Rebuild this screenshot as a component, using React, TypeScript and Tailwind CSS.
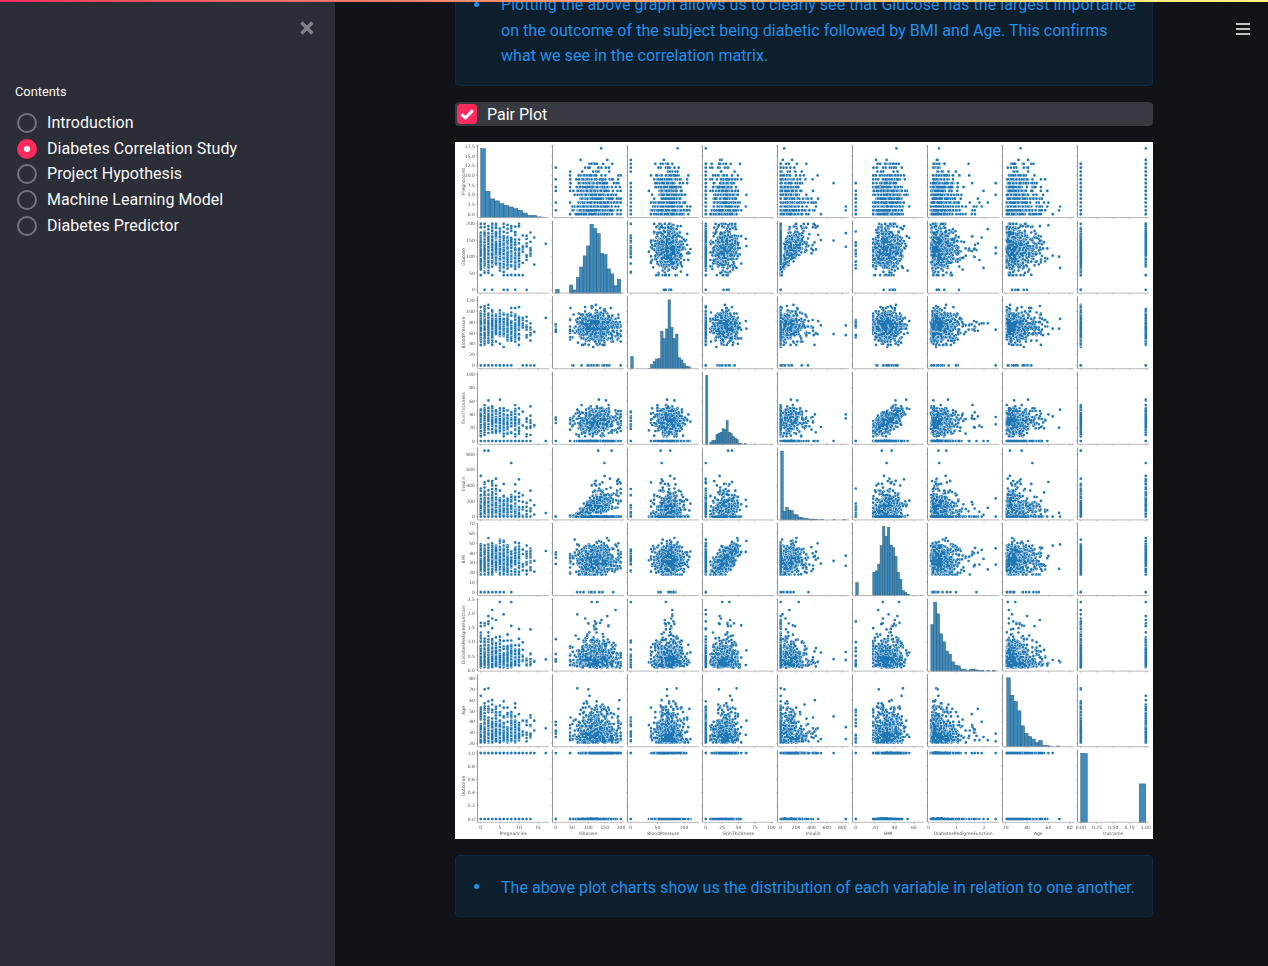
// App.tsx
import React from 'react';

// --- Seeded data for the pair plot ---
function makeRandom(seed: number) {
  return () => {
    seed = (seed + 0x6d2b79f5) | 0;
    let t = Math.imul(seed ^ (seed >>> 15), 1 | seed);
    t = (t + Math.imul(t ^ (t >>> 7), 61 | t)) ^ t;
    return ((t ^ (t >>> 14)) >>> 0) / 4294967296;
  };
}

const clamp = (v: number, lo: number, hi: number) => Math.min(hi, Math.max(lo, v));

const PREG_COUNTS = [111, 135, 103, 75, 68, 57, 50, 45, 38, 28, 24, 11, 9, 10, 2, 1, 0, 1];

function buildRows(): number[][] {
  const rand = makeRandom(42);
  const normal = (m: number, s: number) =>
    m + s * Math.sqrt(-2 * Math.log(1 - rand())) * Math.cos(2 * Math.PI * rand());
  const rows: number[][] = [];
  for (let i = 0; i < 768; i++) {
    const outcome = rand() < 0.349 ? 1 : 0;
    let pick = rand() * 768;
    let preg = 0;
    while (pick > PREG_COUNTS[preg] && preg < 17) {
      pick -= PREG_COUNTS[preg];
      preg++;
    }
    const glucose = rand() < 0.007 ? 0 : Math.round(clamp(normal(outcome ? 141 : 112, outcome ? 32 : 27), 44, 199));
    const bp = rand() < 0.046 ? 0 : 2 * Math.round(clamp(normal(72, 12.5), 24, 122) / 2);
    const bmi = rand() < 0.014 ? 0 : clamp(normal(outcome ? 35 : 31, 7), 18, 67);
    const skin = rand() < 0.3 || bmi === 0 ? 0 : Math.round(clamp(bmi * 0.85 + normal(2, 8), 7, 63));
    const insulin =
      rand() < 0.487 || glucose === 0
        ? 0
        : clamp((glucose - 55) * 1.7 * Math.exp(normal(0, 0.55)) + 15, 14, 846);
    const dpf = clamp(Math.exp(normal(-1.0, 0.62)), 0.08, 2.42);
    let age = 21 + Math.floor(preg * 0.6 * rand() - Math.log(1 - rand()) * 9);
    if (age > 72) age = i % 50 === 0 ? 81 : 21 + Math.floor(rand() * 30);
    rows.push([preg, glucose, bp, skin, insulin, bmi, dpf, age, outcome]);
  }
  return rows;
}

// --- Axis settings, one per variable ---
interface Variable {
  name: string;
  lo: number;
  hi: number;
  xTicks: [number, string][];
  yTicks: [number, string][];
  bins: number;
  counts?: number[]; // bar heights read off the reference, used instead of the generated ones
}

const ticks = (values: number[], digits = 0): [number, string][] => values.map((v) => [v, v.toFixed(digits)]);

const VARIABLES: Variable[] = [
  { name: 'Pregnancies', lo: -0.85, hi: 17.85, xTicks: ticks([0, 5, 10, 15]), yTicks: ticks([0, 2.5, 5, 7.5, 10, 12.5, 15, 17.5], 1), bins: 14, counts: [17, 6.5, 4.6, 4.1, 3.4, 3, 2.6, 2.2, 1.8, 1.1, 0.5, 0.5, 0.15, 0.1] },
  { name: 'Glucose', lo: -10, hi: 209, xTicks: ticks([0, 50, 100, 150, 200]), yTicks: ticks([0, 50, 100, 150, 200]), bins: 19 },
  { name: 'BloodPressure', lo: -6.1, hi: 128.1, xTicks: ticks([0, 50, 100]), yTicks: ticks([0, 20, 40, 60, 80, 100, 120]), bins: 24 },
  { name: 'SkinThickness', lo: -5, hi: 104, xTicks: ticks([0, 25, 50, 75, 100]), yTicks: ticks([0, 20, 40, 60, 80, 100]), bins: 20 },
  { name: 'Insulin', lo: -42, hi: 888, xTicks: ticks([0, 200, 400, 600, 800]), yTicks: ticks([0, 200, 400, 600, 800]), bins: 26 },
  { name: 'BMI', lo: -3.4, hi: 70.5, xTicks: ticks([0, 20, 40, 60]), yTicks: ticks([0, 10, 20, 30, 40, 50, 60, 70]), bins: 22 },
  { name: 'DiabetesPedigreeFunction', lo: -0.04, hi: 2.54, xTicks: ticks([0, 1, 2]), yTicks: ticks([0, 0.5, 1, 1.5, 2, 2.5], 1), bins: 22 },
  { name: 'Age', lo: 17, hi: 84, xTicks: ticks([20, 40, 60, 80]), yTicks: ticks([20, 30, 40, 50, 60, 70, 80]), bins: 15 },
  { name: 'Outcome', lo: -0.05, hi: 1.05, xTicks: ticks([0, 0.25, 0.5, 0.75, 1], 2), yTicks: ticks([0, 0.2, 0.4, 0.6, 0.8, 1], 1), bins: 10 },
];

const CELL_W = 71.5;
const CELL_H = 72.5;
const cellLeft = (col: number) => 22.5 + 75 * col;
const cellTop = (row: number) => 3 + 75.6 * row;

// Scatter panel: chunks drawn in turn so the white marker edges show through
const ScatterPanel = ({ rows, col, row }: { rows: number[][]; col: number; row: number }) => {
  const xVar = VARIABLES[col];
  const yVar = VARIABLES[row];
  const chunks: string[] = ['', '', '', '', '', ''];
  rows.forEach((r, i) => {
    const x = cellLeft(col) + ((r[col] - xVar.lo) / (xVar.hi - xVar.lo)) * CELL_W;
    const y = cellTop(row) + CELL_H - ((r[row] - yVar.lo) / (yVar.hi - yVar.lo)) * CELL_H;
    chunks[i % 6] += `M${x.toFixed(1)} ${y.toFixed(1)}h0`;
  });
  return (
    <g fill="none" strokeLinecap="round">
      {chunks.map((d, i) => (
        <g key={i}>
          <path d={d} stroke="#ffffff" strokeWidth={3.3} />
          <path d={d} stroke="#1f77b4" strokeWidth={2.7} />
        </g>
      ))}
    </g>
  );
};

// Histogram on the diagonal
const HistPanel = ({ rows, index }: { rows: number[][]; index: number }) => {
  const v = VARIABLES[index];
  const values = rows.map((r) => r[index]);
  const min = Math.min(...values);
  const max = Math.max(...values);
  let counts: number[] = new Array(v.bins).fill(0);
  values.forEach((val) => {
    counts[Math.min(v.bins - 1, Math.floor(((val - min) / (max - min)) * v.bins))]++;
  });
  if (v.counts) counts = v.counts;
  const peak = Math.max(...counts);
  const scaleX = (val: number) => cellLeft(index) + ((val - v.lo) / (v.hi - v.lo)) * CELL_W;
  const bottom = cellTop(index) + CELL_H;
  const w = (max - min) / v.bins;
  return (
    <g>
      {counts.map((c, i) =>
        c === 0 ? null : (
          <rect
            key={i}
            x={scaleX(min + i * w)}
            width={scaleX(min + (i + 1) * w) - scaleX(min + i * w)}
            y={bottom - (c / peak) * CELL_H * 0.95}
            height={(c / peak) * CELL_H * 0.95}
            fill="#3f8bbb"
            stroke="#27506e"
            strokeWidth={0.45}
          />
        ),
      )}
    </g>
  );
};

const PairPlot = () => {
  const rows = React.useMemo(buildRows, []);
  const tickFont = { fontFamily: '"DejaVu Sans", sans-serif', fontSize: 4.5, fill: '#555555' };
  return (
    <svg viewBox="0 0 698 697" className="block w-[698px] h-[697px] bg-white blur-[0.35px]">
      {VARIABLES.map((yVar, row) =>
        VARIABLES.map((xVar, col) => {
          const left = cellLeft(col);
          const top = cellTop(row);
          const bottom = top + CELL_H;
          const xPos = (t: number) => left + ((t - xVar.lo) / (xVar.hi - xVar.lo)) * CELL_W;
          const yPos = (t: number) => bottom - ((t - yVar.lo) / (yVar.hi - yVar.lo)) * CELL_H;
          return (
            <g key={`${row}-${col}`}>
              {row === col ? <HistPanel rows={rows} index={row} /> : <ScatterPanel rows={rows} col={col} row={row} />}
              {/* Spines and tick marks */}
              <path d={`M${left} ${top}V${bottom}`} stroke="#8c8c8c" strokeWidth={0.9} />
              <path d={`M${left} ${bottom}H${left + CELL_W}`} stroke="#a8a8a8" strokeWidth={0.8} />
              {yVar.yTicks.map(([t]) => (
                <path key={t} d={`M${left - 1.6} ${yPos(t)}h1.6`} stroke="#777777" strokeWidth={0.4} />
              ))}
              {xVar.xTicks.map(([t]) => (
                <path key={t} d={`M${xPos(t)} ${bottom}v1.6`} stroke="#777777" strokeWidth={0.4} />
              ))}
              {/* Tick labels only on the outer rows and columns */}
              {col === 0 &&
                yVar.yTicks.map(([t, label]) => (
                  <text key={t} x={left - 2.6} y={yPos(t) + 1.6} textAnchor="end" {...tickFont}>
                    {label}
                  </text>
                ))}
              {row === 8 &&
                xVar.xTicks.map(([t, label]) => (
                  <text key={t} x={xPos(t)} y={bottom + 6.6} textAnchor="middle" {...tickFont}>
                    {label}
                  </text>
                ))}
            </g>
          );
        }),
      )}
      {/* Axis labels */}
      {VARIABLES.map((v, i) => (
        <text key={v.name} x={cellLeft(i) + CELL_W / 2} y={693} textAnchor="middle" {...tickFont}>
          {v.name}
        </text>
      ))}
      {VARIABLES.map((v, i) => (
        <text
          key={v.name}
          transform={`translate(9.5 ${cellTop(i) + CELL_H / 2}) rotate(-90)`}
          textAnchor="middle"
          {...tickFont}
        >
          {v.name}
        </text>
      ))}
    </svg>
  );
};

// --- Sidebar radio list ---
const PAGES = ['Introduction', 'Diabetes Correlation Study', 'Project Hypothesis', 'Machine Learning Model', 'Diabetes Predictor'];

const Sidebar = () => (
  <aside className="w-[335px] shrink-0 h-full bg-[#2b2d37] text-[#fafafa]">
    <div className="flex justify-end pt-[21px] pr-[21px]">
      <svg viewBox="0 0 14 14" className="w-[14px] h-[14px]" aria-label="Close">
        <path d="M1.5 1.5l11 11M12.5 1.5l-11 11" stroke="#808187" strokeWidth={3.4} fill="none" />
      </svg>
    </div>
    <div className="pl-[15px] pt-[49px]">
      <p className="text-[12.8px] leading-[16px]">Contents</p>
      <ul className="mt-[10.4px] flex flex-col gap-[0.75px]">
        {PAGES.map((page, i) => (
          <li key={page} className="flex items-center h-[25px] text-[16px] tracking-[0.04px]">
            {i === 1 ? (
              <span className="ml-[2px] w-5 h-5 rounded-full bg-[#ff2b5e] flex items-center justify-center">
                <span className="w-[6px] h-[6px] rounded-full bg-white" />
              </span>
            ) : (
              <span className="ml-[2px] w-5 h-5 rounded-full border-2 border-[#72747b]" />
            )}
            <span className="ml-[10px]">{page}</span>
          </li>
        ))}
      </ul>
    </div>
  </aside>
);

// --- Blue info box ---
const InfoBox = ({ children }: { children: React.ReactNode }) => (
  <div className="rounded border border-[#10293e] bg-[#0d1e2d] pt-[19px] pb-[16px] px-4 text-[16px] leading-[25.6px] tracking-[0.05px] text-[#2391e8]">
    <div className="flex">
      <span className="w-[29px] shrink-0 pl-[2px] pt-[9.5px]">
        <span className="block w-[5px] h-[5px] rounded-full bg-[#2391e8]" />
      </span>
      <p>{children}</p>
    </div>
  </div>
);

export default function App() {
  return (
    <div className="relative flex w-[1268px] h-[966px] overflow-hidden bg-[#111318] font-['Roboto',sans-serif]">
      {/* Top gradient strip */}
      <div className="absolute inset-x-0 top-0 z-10 h-[2px] bg-gradient-to-r from-[#ff2b5e] to-[#fffd80]" />

      <Sidebar />

      <main className="relative flex-1 h-full overflow-hidden">
        {/* Hamburger menu */}
        <svg viewBox="0 0 14 12" className="absolute top-[23px] right-[18px] w-[14px] h-[12px]" aria-label="Menu">
          <path d="M0 1h14M0 6h14M0 11h14" stroke="#ffffff" strokeWidth={1.5} fill="none" />
        </svg>

        <div className="ml-[120px] w-[698px] -mt-[28px] flex flex-col gap-4">
          <InfoBox>
            Plotting the above graph allows us to clearly see that Glucose has the largest importance on the outcome
            of the subject being diabetic followed by BMI and Age. This confirms what we see in the correlation matrix.
          </InfoBox>

          <label className="flex items-center h-6 rounded bg-[#383a41] px-[2px] text-[16px] text-[#fafafa]">
            <span className="w-5 h-5 rounded bg-[#ff2b5e]">
              <svg viewBox="0 0 20 20" className="block w-5 h-5">
                <path d="M4.5 10.4l3.9 3.5L15.8 6.4" stroke="#ffffff" strokeWidth={3} fill="none" />
              </svg>
            </span>
            <span className="ml-[10px] pt-[2px]">Pair Plot</span>
          </label>

          <PairPlot />

          <InfoBox>The above plot charts show us the distribution of each variable in relation to one another.</InfoBox>
        </div>
      </main>
    </div>
  );
}
